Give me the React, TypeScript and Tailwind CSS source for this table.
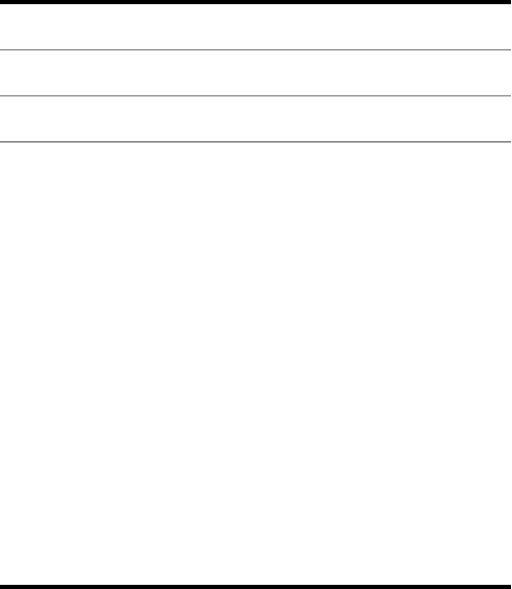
import React from 'react'

const rows = [0, 1]

const App = () => {
  return (
    <div className="flex flex-col w-[511px] h-[589px] bg-white">
      <div className="h-[4px] bg-black" />
      <div className="h-px bg-[#d9d9d9]" />
      {rows.map((idx) => (
        <div key={idx} className="flex flex-col">
          <div className="h-[44px]" />
          <div className="h-px bg-[#9a9a9a]" />
          <div className="h-px bg-[#c8c8c8]" />
        </div>
      ))}
      <div className="h-[44px]" />
      <div className="h-px bg-[#858585]" />
      <div className="h-px bg-[#b0b0b0]" />
      <div className="flex-1" />
      <div className="h-px bg-[#d9d9d9]" />
      <div className="h-[4px] bg-black" />
    </div>
  )
}

export default App
